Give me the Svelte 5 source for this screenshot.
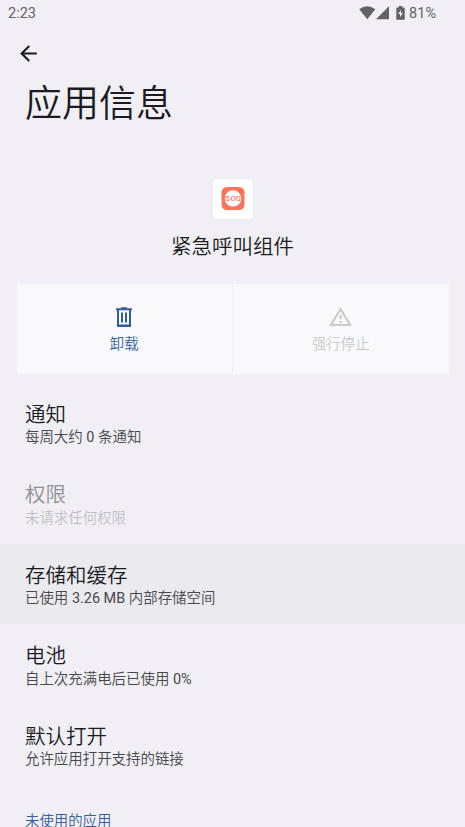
<script>
  const items = [
    { title: '通知', summary: '每周大约 0 条通知' },
    { title: '权限', summary: '未请求任何权限', disabled: true },
    { title: '存储和缓存', summary: '已使用 3.26 MB 内部存储空间', pressed: true },
    { title: '电池', summary: '自上次充满电后已使用 0%' },
    { title: '默认打开', summary: '允许应用打开支持的链接' }
  ];

  // Latin runs are set one weight heavier than the surrounding Chinese text.
  const runs = (text) => text.split(/([\x20-\x7e]+)/).filter(Boolean);
  const isLatin = (run) => /^[\x20-\x7e]+$/.test(run);
</script>

<div class="screen">
  <div class="status">
    <span class="time">2:23</span>
    <div class="indicators">
      <svg class="wifi" width="17" height="14" viewBox="0 0 17 14"><path d="M0.200 3.300Q8.200-2.700 16.300 3.300L8.250 13.200Z" fill="#626166" /></svg>
      <svg class="signal" width="14" height="14" viewBox="0 0 14 14"><path d="M0 13.200L13 0.300V13.200Z" fill="#626166" /></svg>
      <svg class="battery" width="9" height="14" viewBox="0 0 9 14"><path d="M2.700 0h3.600v1.400h1.500q.9 0 .9.900v10.600q0 .9-.9.900H1.200q-.9 0-.9-.900V2.300q0-.9.900-.900h1.500z" fill="#626166" /><path d="M5 3.700L2.200 7.900h1.900v3.300l2.800-4.300H5z" fill="#f1eff5" /></svg>
      <span>81%</span>
    </div>
  </div>

  <header>
    <svg class="back" width="25" height="25" viewBox="0 0 24 24"><path d="M20 11H7.830l5.590-5.590L12 4l-8 8 8 8 1.410-1.410L7.830 13H20v-2z" fill="#1b1b1f" /></svg>
    <h1>应用信息</h1>
  </header>

  <section class="app">
    <div class="app-icon">
      <svg width="24" height="24" viewBox="0 0 24 24">
        <rect x="0.500" y="0" width="23" height="23" rx="5.500" fill="#ff725c" />
        <circle cx="12" cy="11.500" r="8.300" fill="#fff" />
        <text x="12" y="14.400" text-anchor="middle" textLength="16" lengthAdjust="spacingAndGlyphs">SOS</text>
      </svg>
    </div>
    <div class="app-name">紧急呼叫组件</div>
  </section>

  <div class="actions">
    <div class="action">
      <svg width="24" height="24" viewBox="0 0 24 24"><path d="M9 2.300h6v1h5v2h-1V21.200q0 .9-.9.900H5.900Q5 22.100 5 21.200V5.300H4v-2h5zM7 5.300v14.200h10V5.300zM9 7.500h2v10H9zM13 7.500h2v10h-2z" fill="#335e9e" fill-rule="evenodd" /></svg>
      <span>卸载</span>
    </div>
    <div class="action off">
      <svg width="25" height="24" viewBox="0 0 24 24" preserveAspectRatio="none"><path d="M12 5.990L19.530 19H4.470L12 5.990M12 2L1 21h22L12 2zm1 14h-2v2h2v-2zm0-6h-2v4h2v-4z" fill="#c9c9cc" /></svg>
      <span>强行停止</span>
    </div>
  </div>

  <div class="list">
    {#each items as item}
      <div class="item" class:disabled={item.disabled} class:pressed={item.pressed}>
        <div class="title">{item.title}</div>
        <div class="summary">{#each runs(item.summary) as run}<span class:latin={isLatin(run)}>{run}</span>{/each}</div>
      </div>
    {/each}
  </div>
  <div class="category">未使用的应用</div>
</div>

<style>
  :global(body) {
    margin: 0;
    background: #f1eff5;
  }
  .screen {
    width: 465px;
    height: 827px;
    overflow: hidden;
    background: #f1eff5;
    color: #1b1b1f;
    font-family: Roboto, 'Noto Sans CJK SC', sans-serif;
    display: flex;
    flex-direction: column;
  }
  .status {
    height: 26px;
    flex: none;
    padding: 0 29px 0 8px;
    display: flex;
    align-items: center;
    justify-content: space-between;
    font-size: 14.500px;
    color: #626166;
  }
  .indicators {
    display: flex;
    align-items: center;
  }
  .indicators svg { display: block; }
  .battery { margin: 0 4px 0 6px; }
  header {
    height: 134px;
    flex: none;
    padding: 15px 0 0 16px;
    box-sizing: border-box;
  }
  .back { display: block; }
  h1 {
    margin: 12px 0 0 9px;
    font-size: 37px;
    line-height: 54px;
    font-weight: 350;
  }
  .app {
    flex: none;
    height: 124px;
    padding-top: 19px;
    box-sizing: border-box;
    display: flex;
    flex-direction: column;
    align-items: center;
  }
  .app-icon {
    width: 40px;
    height: 40px;
    border-radius: 3px;
    background: #fff;
    box-shadow: 0 0 2px #e2e0e6;
    display: flex;
    align-items: center;
    justify-content: center;
  }
  .app-icon text {
    font: 700 8px Roboto, sans-serif;
    fill: #ff8a78;
  }
  .app-name {
    margin-top: 13px;
    font-size: 20.500px;
    line-height: 30px;
    font-weight: 350;
  }
  .actions {
    flex: none;
    display: flex;
    gap: 1px;
    height: 90px;
    margin: 0 16.500px;
    border-radius: 3px;
    overflow: hidden;
  }
  .action {
    flex: 1;
    background: #f9f9fc;
    display: flex;
    flex-direction: column;
    align-items: center;
    padding-top: 21px;
    color: #335e9e;
    font-size: 14.400px;
    line-height: 22px;
    font-weight: 350;
  }
  .action span { margin-top: 5px; }
  .off { color: #c9c9cc; }
  .list {
    flex: none;
    padding-top: 8.500px;
  }
  .item {
    height: 80.600px;
    box-sizing: border-box;
    padding: 19px 25px 0;
  }
  .title {
    font-size: 20.500px;
    line-height: 26px;
    font-weight: 350;
  }
  .summary {
    margin-top: -0.500px;
    font-size: 14.450px;
    line-height: 21px;
    color: #46464c;
    font-weight: 350;
    white-space: pre;
  }
  .latin { font-weight: 400; }
  .pressed { background: #ebeaef; }
  .disabled .title { color: #8f8e93; }
  .disabled .summary { color: #c1c0c5; }
  .category {
    flex: none;
    padding: 26px 25px 0;
    font-size: 14.400px;
    line-height: 22px;
    font-weight: 350;
    color: #335e9e;
  }
</style>
